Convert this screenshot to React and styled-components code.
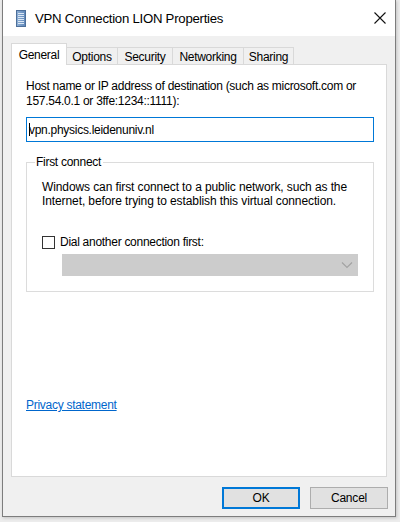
import React from "react";
import styled, { createGlobalStyle } from "styled-components";

const GlobalStyle = createGlobalStyle`
  html, body { margin: 0; padding: 0; background: #ececec; }
  body {
    font-family: "Liberation Sans", Arial, sans-serif;
    font-size: 12px;
    color: #000;
  }
  * { box-sizing: border-box; }
`;

const Page = styled.div`
  width: 400px;
  height: 522px;
  padding-left: 2px;
`;

const Window = styled.div`
  width: 394px;
  height: 517px;
  border: 1px solid #7d7d7d;
  border-top: none;
  background: #f0f0f0;
  display: flex;
  flex-direction: column;
  box-shadow: 1px 1px 3px rgba(0, 0, 0, 0.18);
`;

const TitleBar = styled.div`
  height: 36px;
  background: #fff;
  display: flex;
  align-items: center;
  padding-left: 13px;
  padding-right: 9px;
`;

const Title = styled.div`
  margin-left: 9px;
  font-size: 13.2px;
  letter-spacing: -0.25px;
  color: #000;
`;

const CloseBox = styled.div`
  margin-left: auto;
  width: 12px;
  height: 12px;
  display: flex;
`;

const Body = styled.div`
  flex: 1;
  padding: 7px 8px 0 8px;
  display: flex;
  flex-direction: column;
`;

const TabRow = styled.div`
  display: flex;
  align-items: flex-end;
  height: 21px;
  position: relative;
  z-index: 1;
`;

const Tab = styled.div`
  width: ${(p) => p.$w}px;
  height: ${(p) => (p.$active ? 22 : 17)}px;
  margin-bottom: ${(p) => (p.$active ? -1 : 0)}px;
  margin-left: ${(p) => (p.$first ? 0 : -1)}px;
  border: 1px solid #d9d9d9;
  border-bottom: none;
  background: ${(p) => (p.$active ? "#fff" : "#f0f0f0")};
  display: flex;
  align-items: center;
  justify-content: center;
  letter-spacing: -0.28px;
  position: relative;
  z-index: ${(p) => (p.$active ? 2 : 1)};
  padding-top: ${(p) => (p.$active ? 0 : 1)}px;
`;

const Panel = styled.div`
  height: 413px;
  background: #fff;
  border: 1px solid #d9d9d9;
  padding: 14px 11px 0 14px;
  display: flex;
  flex-direction: column;
  letter-spacing: -0.28px;
`;

const Label = styled.div`
  line-height: 15px;
`;

const TextInput = styled.div`
  margin-top: 8px;
  width: 348px;
  height: 25px;
  border: 1px solid #0078d7;
  display: flex;
  align-items: center;
  padding-left: 2px;
`;

const Caret = styled.span`
  display: inline-block;
  width: 1px;
  height: 13px;
  background: #000;
  margin-right: -1px;
`;

const Group = styled.fieldset`
  margin: 13px 0 0 0;
  width: 348px;
  border: 1px solid #dcdcdc;
  padding: 0 15px 15px 15px;
  min-width: 0;
`;

const Legend = styled.legend`
  margin-left: -7px;
  padding: 0 2px 0 1px;
  line-height: 15px;
`;

const Para = styled.div`
  margin-top: 10px;
  line-height: 14px;
  letter-spacing: -0.1px;
  color: #000;
`;

const CheckRow = styled.label`
  margin-top: 27px;
  display: flex;
  align-items: center;
  gap: 5px;
  line-height: 15px;
`;

const CheckBox = styled.span`
  width: 13px;
  height: 13px;
  border: 1px solid #333;
  background: #fff;
  flex: none;
`;

const Select = styled.div`
  margin: 4px 0 0 20px;
  width: 296px;
  height: 22px;
  background: #cccccc;
  border: 1px solid #cccccc;
  display: flex;
  align-items: center;
  justify-content: flex-end;
  padding-right: 4px;
`;

const Link = styled.a`
  margin-top: 106px;
  align-self: flex-start;
  line-height: 15px;
  color: #0066cc;
  text-decoration: underline;
  cursor: pointer;
`;

const ButtonRow = styled.div`
  margin-top: 10px;
  margin-right: -1px;
  display: flex;
  justify-content: flex-end;
  gap: 10px;
`;

const Button = styled.button`
  width: 78px;
  height: 22px;
  background: #e1e1e1;
  border: ${(p) => (p.$default ? "2px solid #0078d7" : "1px solid #adadad")};
  font-family: "Liberation Sans", Arial, sans-serif;
  font-size: 12px;
  letter-spacing: -0.2px;
  color: #000;
  padding: 0;
`;

function VpnIcon() {
  return (
    <svg width="10" height="17" viewBox="0 0 10 17">
      <defs>
        <linearGradient id="g" x1="0" x2="1" y1="0" y2="0">
          <stop offset="0" stopColor="#8fb0d6" />
          <stop offset="1" stopColor="#5f87b8" />
        </linearGradient>
      </defs>
      <rect x="0.5" y="0.5" width="9" height="16" fill="url(#g)" stroke="#4d6f9a" />
      {[3, 5, 7, 9, 11, 13].map((y) => (
        <line key={y} x1="2" x2="8" y1={y + 0.5} y2={y + 0.5} stroke="#dbe7f4" strokeWidth="1" />
      ))}
    </svg>
  );
}

function CloseIcon() {
  return (
    <svg width="12" height="12" viewBox="0 0 12 12">
      <path d="M0.5 0.5 L11.5 11.5 M11.5 0.5 L0.5 11.5" stroke="#111" strokeWidth="1.1" />
    </svg>
  );
}

function Chevron() {
  return (
    <svg width="12" height="8" viewBox="0 0 12 8">
      <path d="M1 1.5 L6 6.5 L11 1.5" fill="none" stroke="#a3a3a3" strokeWidth="1.2" />
    </svg>
  );
}

const tabs = [
  { label: "General", w: 56, active: true },
  { label: "Options", w: 52 },
  { label: "Security", w: 56 },
  { label: "Networking", w: 72 },
  { label: "Sharing", w: 51 },
];

export default function App() {
  return (
    <>
      <GlobalStyle />
      <Page>
        <Window>
          <TitleBar>
            <VpnIcon />
            <Title>VPN Connection LION Properties</Title>
            <CloseBox>
              <CloseIcon />
            </CloseBox>
          </TitleBar>
          <Body>
            <TabRow>
              {tabs.map((t, i) => (
                <Tab key={t.label} $w={t.w} $active={t.active} $first={i === 0}>
                  {t.label}
                </Tab>
              ))}
            </TabRow>
            <Panel>
              <Label>
                Host name or IP address of destination (such as microsoft.com or
                <br />
                157.54.0.1 or 3ffe:1234::1111):
              </Label>
              <TextInput>
                <Caret />
                vpn.physics.leidenuniv.nl
              </TextInput>
              <Group>
                <Legend>First connect</Legend>
                <Para>
                  Windows can first connect to a public network, such as the
                  <br />
                  Internet, before trying to establish this virtual connection.
                </Para>
                <CheckRow>
                  <CheckBox />
                  Dial another connection first:
                </CheckRow>
                <Select>
                  <Chevron />
                </Select>
              </Group>
              <Link>Privacy statement</Link>
            </Panel>
            <ButtonRow>
              <Button $default>OK</Button>
              <Button>Cancel</Button>
            </ButtonRow>
          </Body>
        </Window>
      </Page>
    </>
  );
}
